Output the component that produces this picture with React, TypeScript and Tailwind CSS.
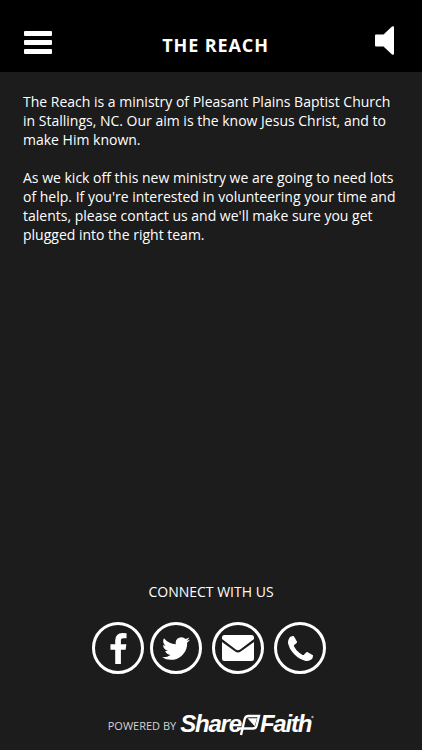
const socials = [
  {
    name: "Facebook",
    className: "-mr-1",
    icon: (
      <svg viewBox="479 0 864 1664" className="h-[31px] w-[17px]" fill="currentColor" aria-hidden="true">
        <path d="M1343 12v264h-157q-86 0-116 36t-30 108v189h293l-39 296h-254v759h-306v-759h-255v-296h255v-218q0-186 104-288.5t277-102.5q147 0 228 12z" />
      </svg>
    ),
  },
  {
    name: "Twitter",
    className: "",
    icon: (
      <svg viewBox="108 256 1576 1280" className="h-[23px] w-7" fill="currentColor" aria-hidden="true">
        <path d="M1684 408q-67 98-162 167 1 14 1 42 0 130-38 259.5t-115.5 248.5-184.5 210.5-258 146-323 54.5q-271 0-496-145 35 4 78 4 225 0 401-138-105-2-188-64.5t-114-159.5q33 5 61 5 43 0 85-11-112-23-185.5-111.5t-73.5-205.5v-4q68 38 146 41-66-44-105-115t-39-154q0-88 44-163 121 149 294.5 238.5t371.5 99.5q-8-38-8-74 0-134 94.5-228.5t228.5-94.5q140 0 236 102 109-21 205-78-37 115-142 178 93-10 186-50z" />
      </svg>
    ),
  },
  {
    name: "Email",
    className: "",
    icon: (
      <svg viewBox="0 0 32 26" className="h-[26px] w-8" fill="currentColor" aria-hidden="true">
        <path d="M2.5 0h27Q32 0 32 2.5V4L18.5 14.2Q16 16.2 13.5 14.2L0 4V2.5Q0 0 2.5 0z" />
        <path d="M0 7l13.2 9.5Q16 18.5 18.8 16.5L32 7v16.5Q32 26 29.5 26h-27Q0 26 0 23.5z" />
      </svg>
    ),
  },
  {
    name: "Phone",
    className: "",
    icon: (
      <svg viewBox="192 128 1408 1408" className="size-[25px]" fill="currentColor" aria-hidden="true">
        <path d="M1600 1240q0 27-10 70.5t-21 68.5q-21 50-122 106-94 51-186 51-27 0-53-3.5t-57.5-12.5-47-14.5-55.5-20.5-49-18q-98-35-175-83-127-79-264-216t-216-264q-48-77-83-175-3-9-18-49t-20.5-55.5-14.5-47-12.5-57.5-3.5-53q0-92 51-186 56-101 106-122 25-11 68.5-21t70.5-10q14 0 21 3 18 6 53 76 11 19 30 54t35 63.5 31 53.5q3 4 17.5 25t21.5 35.5 7 28.5q0 20-28.5 50t-62 55-62 53-28.5 46q0 9 5 22.5t8.5 20.5 14 24 11.5 19q76 137 174 235t235 174q2 1 19 11.5t24 14 20.5 8.5 22.5 5q18 0 46-28.5t53-62 55-62 50-28.5q14 0 28.5 7t35.5 21.5 25 17.5q25 15 53.5 31t63.5 35 54 30q70 35 76 53 3 7 3 21z" />
      </svg>
    ),
  },
];

function Header() {
  return (
    <header className="flex h-[72px] items-center justify-between bg-black pt-3 pr-7 pl-6">
      <button type="button" aria-label="Menu" className="flex w-7 flex-col gap-1">
        <span className="h-[5px] rounded-[1px] bg-white" />
        <span className="h-[5px] rounded-[1px] bg-white" />
        <span className="h-[5px] rounded-[1px] bg-white" />
      </button>
      <h1 className="pt-1.5 pl-1 text-lg leading-6 font-bold tracking-wider">THE REACH</h1>
      <button type="button" aria-label="Sound" className="-mt-1">
        <svg viewBox="0 0 19 29" className="h-[29px] w-[19px]" fill="currentColor" aria-hidden="true">
          <path d="M1 8.5h7.5L17 .5q2-1 2 1v26q0 2-2 1l-8.5-8H1q-1 0-1-1v-10q0-1 1-1z" />
        </svg>
      </button>
    </header>
  );
}

function Logo() {
  return (
    <a
      href="#"
      className="flex items-center pb-1 font-['Liberation_Sans',Arial,sans-serif] text-2xl leading-6 font-bold tracking-tighter italic"
    >
      <span>Share</span>
      <svg viewBox="0 0 24 24" className="-mr-px -ml-1 size-6" fill="none" aria-hidden="true">
        <path
          d="M0 16.500h16q3 0 3.600-3L22 4H11.500q-3 0-3.800 3L4 23"
          stroke="white"
          strokeWidth="2.4"
        />
        <path d="M10.500 6.200h9.500l-2.300 8z" fill="white" />
      </svg>
      <span>Faith</span>
      <svg viewBox="0 0 3 24" className="h-6 w-[3px]" fill="#a3a3a3" aria-hidden="true">
        <circle cx="1.500" cy="5" r="1.200" />
      </svg>
    </a>
  );
}

export default function App() {
  return (
    <div className="flex min-h-screen flex-col bg-[#1c1c1c] font-['Open_Sans',sans-serif] text-white">
      <Header />
      <main className="flex-1 space-y-[19px] px-[23px] pt-5 text-sm leading-[19px]">
        <p>
          The Reach is a ministry of Pleasant Plains Baptist Church in Stallings, NC. Our aim is
          the know Jesus Christ, and to make Him known.
        </p>
        <p>
          As we kick off this new ministry we are going to need lots of help. If you're interested
          in volunteering your time and talents, please contact us and we'll make sure you get
          plugged into the right team.
        </p>
      </main>
      <footer className="flex flex-col items-center pb-2.5">
        <h2 className="text-sm leading-5">CONNECT WITH US</h2>
        <nav className="mt-5 flex gap-[10px] pr-1">
          {socials.map((s) => (
            <a
              key={s.name}
              href="#"
              aria-label={s.name}
              className={`flex size-[52px] items-center justify-center rounded-full border-3 border-white ${s.className}`}
            >
              {s.icon}
            </a>
          ))}
        </nav>
        <div className="mt-[38px] flex items-center gap-1">
          <span className="text-[11px] leading-6 text-[#d4d4d4]">POWERED BY</span>
          <Logo />
        </div>
      </footer>
    </div>
  );
}
